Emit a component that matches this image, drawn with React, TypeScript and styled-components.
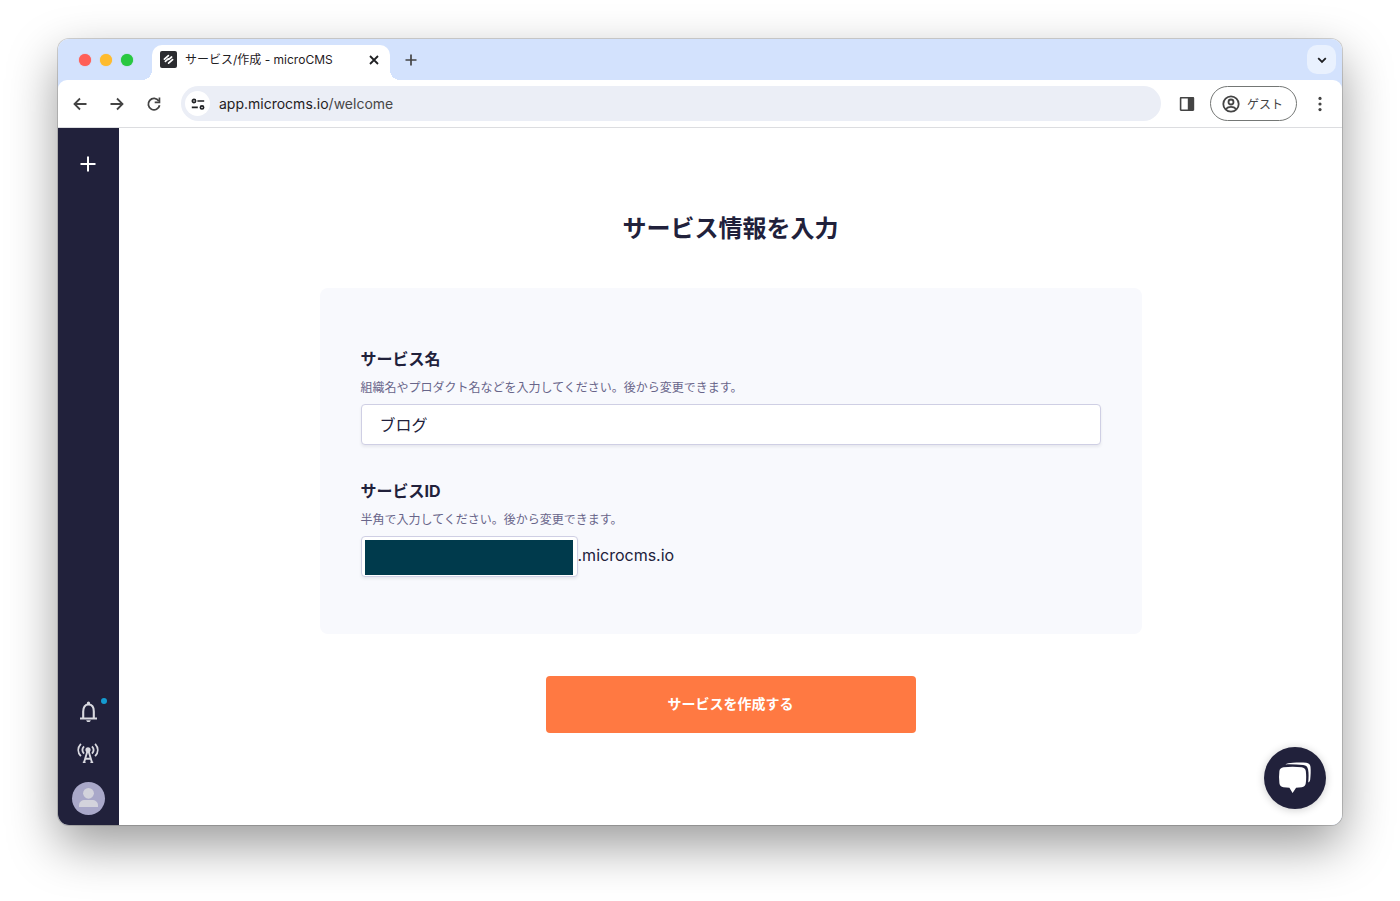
import React, { useState } from "react";
import styled, { createGlobalStyle } from "styled-components";

const navy = "#21213b";
const ink = "#1f2023";

const GlobalStyle = createGlobalStyle`
  *, *::before, *::after { box-sizing: border-box; }
  body {
    margin: 0;
    background: #fff;
    color: ${navy};
    font-family: Inter, "Noto Sans CJK JP", "Liberation Sans", sans-serif;
  }
  button, input { font: inherit; color: inherit; }
  button { padding: 0; border: 0; background: none; cursor: pointer; }
  svg { display: block; }
`;

const Desktop = styled.div`
  display: flex;
  min-height: 100vh;
  padding: 39px 58px 76px;
`;

const BrowserWindow = styled.div`
  position: relative;
  display: flex;
  flex: 1;
  flex-direction: column;
  min-width: 0;
  overflow: hidden;
  border-radius: 11px;
  background: #d3e2fd;
`;

const WindowShadow = styled.div`
  display: flex;
  flex: 1;
  min-width: 0;
  border-radius: 11px;
  box-shadow: 0 0 0 1px rgba(0, 0, 0, 0.16), 0 20px 50px rgba(0, 0, 0, 0.4);
`;

const TabStrip = styled.div`
  display: flex;
  align-items: flex-end;
  height: 41px;
  padding: 0 6px 0 21px;
`;

const Lights = styled.div`
  display: flex;
  gap: 9px;
  margin-right: 19px;
  padding-bottom: 14px;
`;

const Light = styled.button<{ $color: string }>`
  width: 12px;
  height: 12px;
  border-radius: 50%;
  background: ${(p) => p.$color};
  box-shadow: 0 0 1px ${(p) => p.$color};
`;

const Tab = styled.div`
  position: relative;
  display: flex;
  align-items: center;
  width: 238px;
  height: 35px;
  padding: 0 8px 6px;
  border-radius: 10px 10px 0 0;
  background: #fff;
  color: ${ink};
  font-size: 12px;
  line-height: 18px;

  &::before,
  &::after {
    content: "";
    position: absolute;
    bottom: 0;
    width: 10px;
    height: 10px;
  }
  &::before {
    right: 100%;
    background: radial-gradient(circle at 0 0, transparent 10px, #fff 10px);
  }
  &::after {
    left: 100%;
    background: radial-gradient(circle at 100% 0, transparent 10px, #fff 10px);
  }
`;

const TabTitle = styled.span`
  flex: 1;
  margin-left: 8px;
  white-space: nowrap;
`;

const IconButton = styled.button<{ $size?: number }>`
  display: flex;
  flex: none;
  align-items: center;
  justify-content: center;
  width: ${(p) => p.$size ?? 16}px;
  height: ${(p) => p.$size ?? 16}px;
  color: #444;
`;

const TabClose = styled(IconButton)`
  color: ${ink};
`;

const NewTab = styled(IconButton)`
  margin: 0 auto 12px 13px;
`;

const TabSearch = styled(IconButton)`
  margin-bottom: 6px;
  border-radius: 10px;
  background: #e9f1fe;
  color: ${ink};
`;

const Toolbar = styled.div`
  display: flex;
  align-items: center;
  height: 48px;
  padding: 0 14px;
  border-bottom: 1px solid #dcdde0;
  border-radius: 9px 9px 0 0;
  background: #fff;
`;

const NavButtons = styled.div`
  display: flex;
  gap: 21px;
  margin-right: 19px;
`;

const AddressBar = styled.div`
  display: flex;
  flex: 1;
  align-items: center;
  gap: 9px;
  height: 35px;
  padding: 0 4px;
  border-radius: 18px;
  background: #ebeef6;
`;

const SiteInfo = styled(IconButton)`
  border-radius: 50%;
  background: #fff;
  color: ${ink};
`;

const Url = styled.span`
  color: ${ink};
  font-size: 14px;
  line-height: 20px;
`;

const UrlPath = styled.span`
  color: #474747;
`;

const ToolbarEnd = styled.div`
  display: flex;
  align-items: center;
  gap: 15px;
  margin-left: 18px;
`;

const GuestButton = styled.button`
  display: flex;
  align-items: center;
  gap: 7px;
  width: 87px;
  height: 35px;
  padding: 0 11px;
  border: 1px solid #747775;
  border-radius: 18px;
  color: #444;
  font-size: 12px;
  white-space: nowrap;
`;

const Page = styled.div`
  position: relative;
  display: flex;
  flex: 1;
  background: #fff;
`;

const Sidebar = styled.nav`
  display: flex;
  flex: none;
  flex-direction: column;
  align-items: center;
  width: 61px;
  padding: 28px 1px 10px 0;
  background: ${navy};
`;

const SideButton = styled(IconButton)`
  position: relative;
  color: #d9d9e0;
`;

const AddButton = styled(SideButton)`
  margin-bottom: auto;
  color: #fff;
`;

const SideGroup = styled.div`
  display: flex;
  flex-direction: column;
  align-items: center;
  gap: 18px;
`;

const UnreadDot = styled.span`
  position: absolute;
  top: -2px;
  right: -7px;
  width: 6px;
  height: 6px;
  border-radius: 50%;
  background: #149bd0;
`;

const Avatar = styled(SideButton)`
  overflow: hidden;
  border-radius: 50%;
  background: #a9a8c9;
`;

const Main = styled.main`
  flex: 1;
  min-width: 0;
  padding: 83px 40px 40px;
`;

const Form = styled.form`
  display: flex;
  flex-direction: column;
  align-items: center;
`;

const Title = styled.h1`
  margin: 0 0 41px;
  font-size: 24px;
  font-weight: 700;
  line-height: 36px;
`;

const Card = styled.div`
  display: flex;
  flex-direction: column;
  gap: 34px;
  width: 100%;
  max-width: 822px;
  padding: 59px 41px 57px;
  border-radius: 8px;
  background: #f8f9fd;
`;

const Field = styled.div`
  display: flex;
  flex-direction: column;
`;

const Label = styled.label`
  margin-bottom: 8px;
  font-size: 16px;
  font-weight: 700;
  line-height: 24px;
`;

const Hint = styled.p`
  margin: 0 0 7px;
  color: #68658a;
  font-size: 12px;
  line-height: 18px;
`;

const TextInput = styled.input`
  width: 100%;
  height: 41px;
  padding: 0 18px 2px;
  border: 1px solid #cfcfe4;
  border-radius: 4px;
  background: #fff;
  box-shadow: 0 2px 3px rgba(33, 33, 59, 0.08);
  font-size: 16px;
  outline: none;
`;

const DomainRow = styled.div`
  display: flex;
  align-items: center;
`;

/* The value is hidden behind a solid block that leaves a thin white rim. */
const MaskedInput = styled(TextInput)`
  width: 217px;
  padding: 3px 4px 1px 3px;
  background: linear-gradient(#003a4c, #003a4c) content-box, #fff;
  color: transparent;
`;

const DomainSuffix = styled.span`
  padding-bottom: 3px;
  font-size: 16px;
  line-height: 24px;
`;

const SubmitButton = styled.button`
  width: 370px;
  max-width: 100%;
  height: 57px;
  margin-top: 42px;
  padding-bottom: 3px;
  border-radius: 4px;
  background: #ff7942;
  color: #fff;
  font-size: 14px;
  font-weight: 700;
`;

const ChatButton = styled.button`
  position: absolute;
  right: 16px;
  bottom: 16px;
  display: flex;
  align-items: center;
  justify-content: center;
  width: 62px;
  height: 62px;
  border-radius: 50%;
  background: ${navy};
  box-shadow: 0 1px 8px rgba(0, 0, 0, 0.2);
`;

type StrokeIconProps = { d: string; size?: number; width?: number };

const StrokeIcon = ({ d, size = 16, width = 1.8 }: StrokeIconProps) => (
  <svg width={size} height={size} viewBox="0 0 16 16" fill="none" stroke="currentColor" strokeWidth={width} aria-hidden>
    <path d={d} />
  </svg>
);

const Favicon = () => (
  <svg width="17" height="17" viewBox="0 0 17 17" aria-hidden>
    <rect width="17" height="17" rx="2" fill="#2b2c30" />
    <g fill="none" stroke="#fff" strokeWidth="1.7" strokeLinecap="round" strokeLinejoin="round">
      <path d="M4.4 8.2 8.4 4.6" />
      <path d="M5.4 10.4 8.2 7.9 8.8 8.4 11.6 6" />
      <path d="M8.6 12.2 12.6 8.6" />
    </g>
  </svg>
);

const ReloadIcon = () => (
  <svg width="16" height="16" viewBox="0 0 16 16" fill="none" aria-hidden>
    <path d="M12.8 5A5.7 5.7 0 1 0 13.6 9.2" stroke="currentColor" strokeWidth="1.8" />
    <path d="M14.3 1.6v5.6H8.7V5.6h3.9v-4z" fill="currentColor" />
  </svg>
);

const TuneIcon = () => (
  <svg width="14" height="14" viewBox="0 0 14 14" fill="none" stroke="currentColor" strokeWidth="1.7" aria-hidden>
    <circle cx="3" cy="4" r="1.6" />
    <path d="M6.4 4h6.8M.8 10.4h6" />
    <circle cx="11" cy="10.4" r="1.6" />
  </svg>
);

const SidePanelIcon = () => (
  <svg width="16" height="16" viewBox="0 0 16 16" aria-hidden>
    <path
      fill="currentColor"
      fillRule="evenodd"
      d="M2 1h12c.7 0 1.2.5 1.2 1.2v11.6c0 .7-.5 1.2-1.2 1.2H2c-.7 0-1.2-.5-1.2-1.2V2.2C.8 1.5 1.3 1 2 1zM2.4 2.6v10.8h6.4V2.6z"
    />
  </svg>
);

const AccountIcon = () => (
  <svg width="18" height="18" viewBox="0 0 18 18" fill="none" stroke="currentColor" strokeWidth="1.8" aria-hidden>
    <circle cx="9" cy="9" r="7.7" />
    <circle cx="9" cy="7" r="2.5" />
    <path d="M3.8 14c1.4-1.5 3.2-2.2 5.2-2.2s3.8.7 5.2 2.2" />
  </svg>
);

const MoreIcon = () => (
  <svg width="16" height="16" viewBox="0 0 16 16" fill="currentColor" aria-hidden>
    <circle cx="8" cy="2.4" r="1.6" />
    <circle cx="8" cy="8" r="1.6" />
    <circle cx="8" cy="13.6" r="1.6" />
  </svg>
);

const BellIcon = () => (
  <svg width="21" height="23" viewBox="0 0 21 23" fill="currentColor" aria-hidden>
    <path d="M2 17.5h17v2H2z" />
    <path
      d="M5.2 18v-6.5c0-4.3 1.9-7 5.3-7s5.3 2.7 5.3 7V18"
      fill="none"
      stroke="currentColor"
      strokeWidth="2.1"
    />
    <path d="M8.9 4.2V3a1.6 1.6 0 0 1 3.2 0v1.2zM8.2 20.2h4.6c-.3 1.2-1.1 1.900-2.300 1.900s-2-.7-2.300-1.900z" />
  </svg>
);

const AntennaIcon = () => (
  <svg width="22" height="22" viewBox="0 0 22 22" fill="none" stroke="currentColor" strokeWidth="1.8" aria-hidden>
    <path d="M3.9 1.8C.4 5.600.4 10.400 3.900 14.200M7 4.300c-2.100 2.400-2.100 5 0 7.400M18.100 1.800c3.500 3.800 3.500 8.600 0 12.400M15 4.300c2.100 2.400 2.100 5 0 7.400" />
    <circle cx="11" cy="7.8" r="2.6" fill="currentColor" stroke="none" />
    <path d="M10.5 9 7 20.5M11.5 9l3.5 11.5M8.6 16.8h4.8" strokeWidth="1.9" />
    <path d="M5.8 20.4h2.8M13.4 20.4h2.8" strokeWidth="1.3" />
  </svg>
);

const PersonIcon = () => (
  <svg width="33" height="33" viewBox="0 0 33 33" fill="#d3d3dc" aria-hidden>
    <circle cx="16.5" cy="11.3" r="5.4" />
    <path d="M7 25v-1.6c0-3.4 2.7-5.4 6-5.4h7c3.3 0 6 2 6 5.4V25z" />
  </svg>
);

const ChatIcon = () => (
  <svg width="34" height="34" viewBox="0 0 34 34" fill="#fff" aria-hidden>
    <path d="M7.3 3.4C9 2.1 11 1.9 15 1.7c5-.3 9.7-.3 13.3.1 2.4.3 4 1.7 4.2 4 .4 4 .2 8.6-.3 12.6-.2 1.5-.8 2.5-2 3.2.5-4.6.6-9-.1-13-.5-2.9-2-4.3-4.9-4.6-5.8-.6-11.5-.7-17.9-.6z" />
    <path d="M5.5 6.2c6-.7 12.3-.7 18.2 0 2.3.3 3.8 1.6 4.1 3.9.5 4 .5 8.2 0 12.1-.3 2.3-1.7 3.7-4 4-1.9.3-3.8.4-5.7.5L14.6 32l-3.2-5.3c-2-.1-4-.2-6-.5-2.3-.3-3.7-1.7-4-4-.5-4-.5-8.1 0-12.1.3-2.3 1.8-3.6 4.1-3.9z" />
  </svg>
);

export default function App() {
  const [name, setName] = useState("ブログ");
  const [serviceId, setServiceId] = useState("");

  return (
    <Desktop>
      <GlobalStyle />
      <WindowShadow>
        <BrowserWindow>
          <TabStrip>
            <Lights>
              <Light $color="#ff5f57" aria-label="閉じる" />
              <Light $color="#febb2e" aria-label="最小化" />
              <Light $color="#28c840" aria-label="最大化" />
            </Lights>
            <Tab>
              <Favicon />
              <TabTitle>サービス/作成 - microCMS</TabTitle>
              <TabClose aria-label="タブを閉じる">
                <StrokeIcon d="m4 4 8 8m0-8-8 8" />
              </TabClose>
            </Tab>
            <NewTab aria-label="新しいタブ">
              <StrokeIcon d="M8 2.5v11M2.5 8h11" width={1.7} />
            </NewTab>
            <TabSearch $size={29} aria-label="タブを検索">
              <StrokeIcon d="m4.2 6.2 3.8 3.8 3.8-3.8" />
            </TabSearch>
          </TabStrip>

          <Toolbar>
            <NavButtons>
              <IconButton aria-label="戻る">
                <StrokeIcon d="M14.5 8h-12M8 2.5 2.5 8 8 13.5" />
              </IconButton>
              <IconButton aria-label="進む">
                <StrokeIcon d="M1.5 8h12M8 2.5 13.5 8 8 13.5" />
              </IconButton>
              <IconButton aria-label="再読み込み">
                <ReloadIcon />
              </IconButton>
            </NavButtons>
            <AddressBar>
              <SiteInfo $size={25} aria-label="サイト情報">
                <TuneIcon />
              </SiteInfo>
              <Url>
                app.microcms.io<UrlPath>/welcome</UrlPath>
              </Url>
            </AddressBar>
            <ToolbarEnd>
              <IconButton aria-label="サイドパネル">
                <SidePanelIcon />
              </IconButton>
              <GuestButton>
                <AccountIcon />
                ゲスト
              </GuestButton>
              <IconButton aria-label="メニュー">
                <MoreIcon />
              </IconButton>
            </ToolbarEnd>
          </Toolbar>

          <Page>
            <Sidebar>
              <AddButton aria-label="サービスを追加">
                <StrokeIcon d="M8 .5v15M.5 8h15" width={2} />
              </AddButton>
              <SideGroup>
                <SideButton $size={23} aria-label="お知らせ">
                  <BellIcon />
                  <UnreadDot />
                </SideButton>
                <SideButton $size={23} aria-label="稼働状況">
                  <AntennaIcon />
                </SideButton>
                <Avatar $size={33} aria-label="アカウント">
                  <PersonIcon />
                </Avatar>
              </SideGroup>
            </Sidebar>

            <Main>
              <Form onSubmit={(e) => e.preventDefault()}>
                <Title>サービス情報を入力</Title>
                <Card>
                  <Field>
                    <Label htmlFor="service-name">サービス名</Label>
                    <Hint>組織名やプロダクト名などを入力してください。後から変更できます。</Hint>
                    <TextInput id="service-name" value={name} onChange={(e) => setName(e.target.value)} />
                  </Field>
                  <Field>
                    <Label htmlFor="service-id">サービスID</Label>
                    <Hint>半角で入力してください。後から変更できます。</Hint>
                    <DomainRow>
                      <MaskedInput id="service-id" value={serviceId} onChange={(e) => setServiceId(e.target.value)} />
                      <DomainSuffix>.microcms.io</DomainSuffix>
                    </DomainRow>
                  </Field>
                </Card>
                <SubmitButton type="submit">サービスを作成する</SubmitButton>
              </Form>
            </Main>

            <ChatButton aria-label="チャット">
              <ChatIcon />
            </ChatButton>
          </Page>
        </BrowserWindow>
      </WindowShadow>
    </Desktop>
  );
}
